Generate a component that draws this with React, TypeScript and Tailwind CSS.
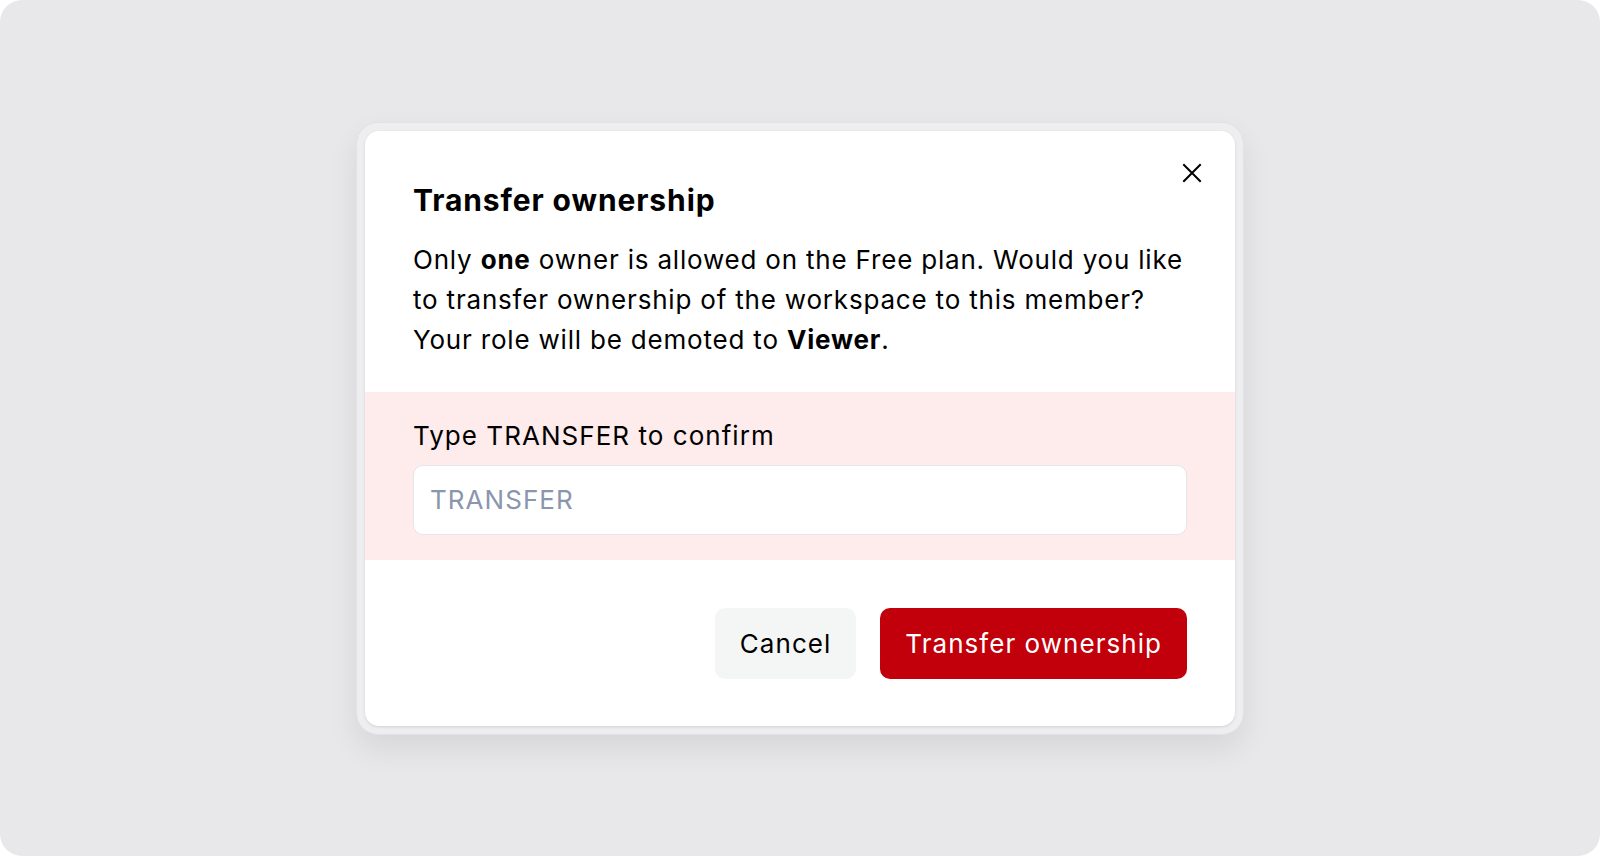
export default function App() {
  return (
    <div className="h-[856px] w-[1600px] bg-white" style={{ fontFamily: "Inter, 'Noto Sans', sans-serif" }}>
      <div className="flex h-full w-full items-center justify-center rounded-[22px] bg-[#e8e8ea]">
        {/* outer frame around the dialog */}
        <div className="rounded-[22px] border border-[#e2e2e4] bg-[#eeeef0] p-2 shadow-[0_14px_30px_rgba(0,0,0,0.08)]">
          <div className="relative w-[870px] overflow-hidden rounded-[14px] bg-white shadow-[0_1px_3px_rgba(0,0,0,0.12)]">
            <button className="absolute right-[33px] top-[32px] text-black">
              <svg width="20" height="20" viewBox="0 0 20 20" fill="none" stroke="currentColor" strokeWidth="2" strokeLinecap="square">
                <path d="M2 2L18 18M18 2L2 18" />
              </svg>
            </button>

            <div className="px-12 pb-8 pt-[51px]">
              <h2 className="text-[30px] font-bold leading-[36px] tracking-[0.03em] text-black">Transfer ownership</h2>
              <p className="mt-[22px] whitespace-nowrap text-[26px] leading-[40px] tracking-[0.031em] text-black">
                Only <b className="font-bold">one</b> owner is allowed on the Free plan. Would you like
                <br />
                to transfer ownership of the workspace to this member?
                <br />
                Your role will be demoted to <b className="font-bold">Viewer</b>.
              </p>
            </div>

            <div className="bg-[#feebeb] px-12 pb-[25px] pt-6">
              <label className="mb-[9px] block text-[26px] leading-[40px] tracking-[0.04em] text-black">
                Type TRANSFER to confirm
              </label>
              <input
                className="h-[70px] w-full rounded-[10px] border border-[#e6e6e6] bg-white px-4 text-[26px] tracking-[0.04em] text-black outline-none placeholder:text-[#8a96ae]"
                placeholder="TRANSFER"
              />
            </div>

            <div className="flex justify-end gap-6 px-12 pb-[47px] pt-12">
              <button className="h-[71px] rounded-[10px] bg-[#f4f5f5] px-[25px] text-[26px] tracking-[0.04em] text-black">
                Cancel
              </button>
              <button className="h-[71px] rounded-[10px] bg-[#c1000b] px-[25px] text-[26px] tracking-[0.04em] text-white">
                Transfer ownership
              </button>
            </div>
          </div>
        </div>
      </div>
    </div>
  )
}
